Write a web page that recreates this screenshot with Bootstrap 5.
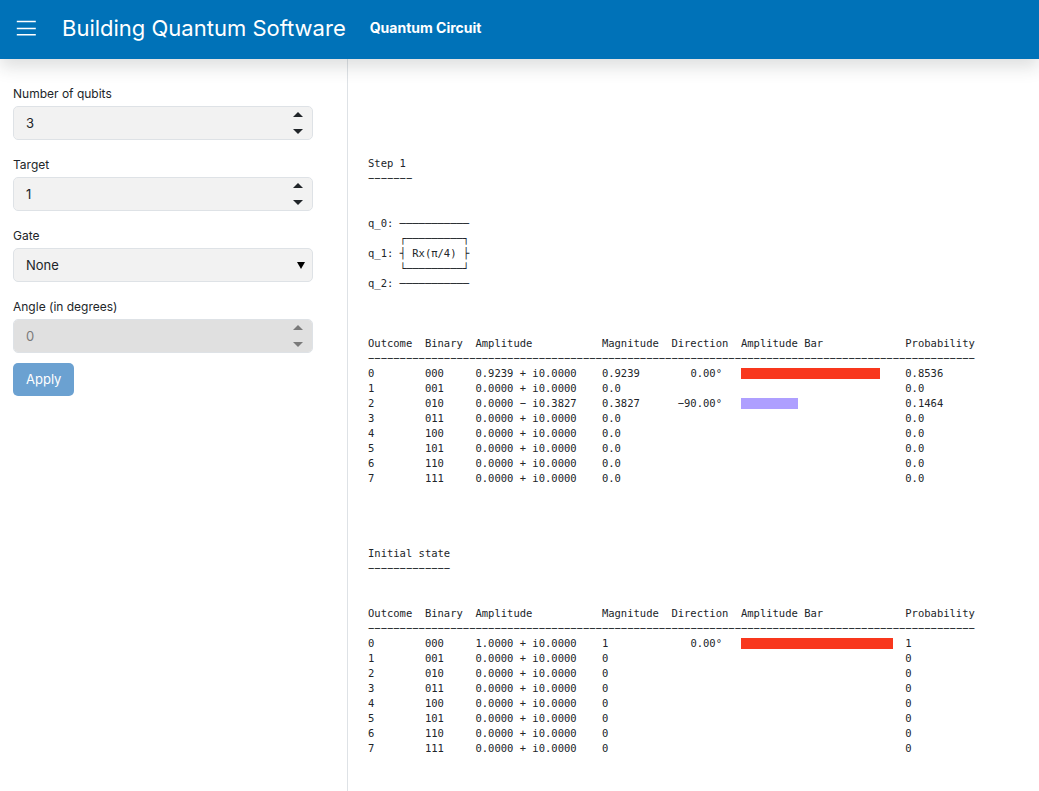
<!DOCTYPE html>
<html lang="en">
<head>
<meta charset="utf-8">
<meta name="viewport" content="width=device-width, initial-scale=1">
<title>Quantum Circuit</title>
<link href="https://cdn.jsdelivr.net/npm/bootstrap@5.3.0/dist/css/bootstrap.min.css" rel="stylesheet">
<style>
  body { font-family: Inter, "Liberation Sans", sans-serif; color: #212529; }
  .topbar { height: 59px; padding: 0 16px 4px; background: #0072b8; color: #fff; z-index: 2; }
  .menu-toggle { width: 20px; height: 20px; }
  .site-title { font-size: 22px; line-height: 30px; margin-left: 26px; color: #fff; }
  .page-link-name { font-size: 14px; line-height: 20px; margin-left: 24px; color: #fff; }

  .controls { width: 348px; padding: 25px 34px 24px 13px; border-right: 1px solid #dee2e6; }
  .field { margin-bottom: 15px; }
  .field:last-of-type { margin-bottom: 10px; }
  .field label { display: block; font-size: 12px; line-height: 20px; margin-bottom: 2px; }
  .field .form-control, .field .form-select {
    height: 34px; padding: 0 12px; font-size: 13px; line-height: 20px;
    background-color: #f2f2f2; border-color: #dee2e6; border-radius: 5px; color: #212529;
  }
  .field .form-select {
    background-image: url("data:image/svg+xml,%3Csvg xmlns='http://www.w3.org/2000/svg' viewBox='0 0 8 7'%3E%3Cpath d='M0 0h8L4 7z'/%3E%3C/svg%3E");
    background-size: 8px 7px; background-position: right 7px center;
  }
  .field .form-control:disabled { background-color: #e0e0e0; color: #7a7a7a; opacity: 1; }
  input[type=number] { appearance: textfield; -moz-appearance: textfield; }
  input[type=number]::-webkit-inner-spin-button { display: none; }
  .stepper { position: absolute; top: 0; bottom: 0; right: 6px; width: 18px; }
  .stepper button { display: flex; flex: 1; align-items: center; justify-content: center; padding: 0; border: 0; background: none; color: #212529; }
  .stepper button:disabled { color: #7a7a7a; }
  .btn-apply { height: 33px; padding: 0 13px; font-size: 13px; background: #6ba1d1; color: #fff; border: 0; border-radius: 5px; }

  .readout { padding: 97px 20px 36px; font-size: 12px; line-height: 15px; }
  .readout pre, .readout table { font-family: "DejaVu Sans Mono", "Liberation Mono", monospace; line-height: 15px; margin: 0; }
  .readout pre { overflow: visible; }
  .state-table { table-layout: fixed; width: 96ch; border-collapse: collapse; white-space: pre; }
  .state-table th { font-weight: 400; }
  .state-table th, .state-table td { padding: 0; height: 15px; }
  .w-outcome { width: 9ch; } .w-binary { width: 8ch; } .w-amp { width: 20ch; }
  .w-mag, .w-dir, .w-prob { width: 11ch; } .w-bar { width: 26ch; }
  .state-table td:nth-child(5) { text-align: right; padding-right: 3ch; }
  .amp-bar { height: 11px; }
  .phase-zero { background: #f8371d; }
  .phase-neg { background: #ae9fff; }
</style>
</head>
<body class="d-flex flex-column min-vh-100">
<header class="topbar d-flex align-items-center shadow position-relative">
  <button type="button" class="menu-toggle btn p-0 border-0 d-flex" aria-label="Menu">
    <svg width="20" height="20" viewBox="0 0 20 20" fill="none" stroke="#fff" stroke-width="1.4"><path d="M.8 3.5h19M.8 10.5h19M.8 16.8h19"/></svg>
  </button>
  <a href="#" class="site-title text-decoration-none">Building Quantum Software</a>
  <a href="#" class="page-link-name fw-bold text-decoration-none">Quantum Circuit</a>
</header>

<div class="d-flex flex-grow-1">
  <aside class="controls flex-shrink-0">
    <form>
      <div class="field">
        <label for="qubits">Number of qubits</label>
        <div class="position-relative">
          <input id="qubits" type="number" class="form-control" value="3">
          <div class="stepper d-flex flex-column">
            <button type="button" aria-label="More qubits"><svg width="10" height="5" viewBox="0 0 10 5" fill="currentColor"><path d="M0 5 5 0l5 5z"/></svg></button>
            <button type="button" aria-label="Fewer qubits"><svg width="10" height="5" viewBox="0 0 10 5" fill="currentColor"><path d="M0 0h10L5 5z"/></svg></button>
          </div>
        </div>
      </div>
      <div class="field">
        <label for="target">Target</label>
        <div class="position-relative">
          <input id="target" type="number" class="form-control" value="1">
          <div class="stepper d-flex flex-column">
            <button type="button" aria-label="Next target"><svg width="10" height="5" viewBox="0 0 10 5" fill="currentColor"><path d="M0 5 5 0l5 5z"/></svg></button>
            <button type="button" aria-label="Previous target"><svg width="10" height="5" viewBox="0 0 10 5" fill="currentColor"><path d="M0 0h10L5 5z"/></svg></button>
          </div>
        </div>
      </div>
      <div class="field">
        <label for="gate">Gate</label>
        <select id="gate" class="form-select"><option>None</option></select>
      </div>
      <div class="field">
        <label for="angle">Angle (in degrees)</label>
        <div class="position-relative">
          <input id="angle" type="number" class="form-control" value="0" disabled>
          <div class="stepper d-flex flex-column">
            <button type="button" disabled aria-label="Increase angle"><svg width="10" height="5" viewBox="0 0 10 5" fill="currentColor"><path d="M0 5 5 0l5 5z"/></svg></button>
            <button type="button" disabled aria-label="Decrease angle"><svg width="10" height="5" viewBox="0 0 10 5" fill="currentColor"><path d="M0 0h10L5 5z"/></svg></button>
          </div>
        </div>
      </div>
      <button type="button" class="btn btn-apply">Apply</button>
    </form>
  </aside>

  <main class="readout flex-grow-1">
<pre>Step 1
−−−−−−−


q_0: ───────────
     ┌─────────┐
q_1: ┤ Rx(π/4) ├
     └─────────┘
q_2: ───────────


 </pre>
    <table class="state-table small">
      <colgroup><col class="w-outcome"><col class="w-binary"><col class="w-amp"><col class="w-mag"><col class="w-dir"><col class="w-bar"><col class="w-prob"></colgroup>
      <thead>
        <tr><th>Outcome</th><th>Binary</th><th>Amplitude</th><th>Magnitude</th><th>Direction</th><th>Amplitude Bar</th><th>Probability</th></tr>
        <tr><td colspan="7">−−−−−−−−−−−−−−−−−−−−−−−−−−−−−−−−−−−−−−−−−−−−−−−−−−−−−−−−−−−−−−−−−−−−−−−−−−−−−−−−−−−−−−−−−−−−−−−−</td></tr>
      </thead>
      <tbody>
        <tr><td>0</td><td>000</td><td>0.9239 + i0.0000</td><td>0.9239</td><td>0.00°</td><td><div class="amp-bar phase-zero" style="width:22ch"></div></td><td>0.8536</td></tr>
        <tr><td>1</td><td>001</td><td>0.0000 + i0.0000</td><td>0.0</td><td></td><td></td><td>0.0</td></tr>
        <tr><td>2</td><td>010</td><td>0.0000 − i0.3827</td><td>0.3827</td><td>−90.00°</td><td><div class="amp-bar phase-neg" style="width:9ch"></div></td><td>0.1464</td></tr>
        <tr><td>3</td><td>011</td><td>0.0000 + i0.0000</td><td>0.0</td><td></td><td></td><td>0.0</td></tr>
        <tr><td>4</td><td>100</td><td>0.0000 + i0.0000</td><td>0.0</td><td></td><td></td><td>0.0</td></tr>
        <tr><td>5</td><td>101</td><td>0.0000 + i0.0000</td><td>0.0</td><td></td><td></td><td>0.0</td></tr>
        <tr><td>6</td><td>110</td><td>0.0000 + i0.0000</td><td>0.0</td><td></td><td></td><td>0.0</td></tr>
        <tr><td>7</td><td>111</td><td>0.0000 + i0.0000</td><td>0.0</td><td></td><td></td><td>0.0</td></tr>
      </tbody>
    </table>
<pre>




Initial state
−−−−−−−−−−−−−

 </pre>
    <table class="state-table small">
      <colgroup><col class="w-outcome"><col class="w-binary"><col class="w-amp"><col class="w-mag"><col class="w-dir"><col class="w-bar"><col class="w-prob"></colgroup>
      <thead>
        <tr><th>Outcome</th><th>Binary</th><th>Amplitude</th><th>Magnitude</th><th>Direction</th><th>Amplitude Bar</th><th>Probability</th></tr>
        <tr><td colspan="7">−−−−−−−−−−−−−−−−−−−−−−−−−−−−−−−−−−−−−−−−−−−−−−−−−−−−−−−−−−−−−−−−−−−−−−−−−−−−−−−−−−−−−−−−−−−−−−−−</td></tr>
      </thead>
      <tbody>
        <tr><td>0</td><td>000</td><td>1.0000 + i0.0000</td><td>1</td><td>0.00°</td><td><div class="amp-bar phase-zero" style="width:24ch"></div></td><td>1</td></tr>
        <tr><td>1</td><td>001</td><td>0.0000 + i0.0000</td><td>0</td><td></td><td></td><td>0</td></tr>
        <tr><td>2</td><td>010</td><td>0.0000 + i0.0000</td><td>0</td><td></td><td></td><td>0</td></tr>
        <tr><td>3</td><td>011</td><td>0.0000 + i0.0000</td><td>0</td><td></td><td></td><td>0</td></tr>
        <tr><td>4</td><td>100</td><td>0.0000 + i0.0000</td><td>0</td><td></td><td></td><td>0</td></tr>
        <tr><td>5</td><td>101</td><td>0.0000 + i0.0000</td><td>0</td><td></td><td></td><td>0</td></tr>
        <tr><td>6</td><td>110</td><td>0.0000 + i0.0000</td><td>0</td><td></td><td></td><td>0</td></tr>
        <tr><td>7</td><td>111</td><td>0.0000 + i0.0000</td><td>0</td><td></td><td></td><td>0</td></tr>
      </tbody>
    </table>
  </main>
</div>
<script src="https://cdn.jsdelivr.net/npm/bootstrap@5.3.0/dist/js/bootstrap.bundle.min.js"></script>
</body>
</html>
